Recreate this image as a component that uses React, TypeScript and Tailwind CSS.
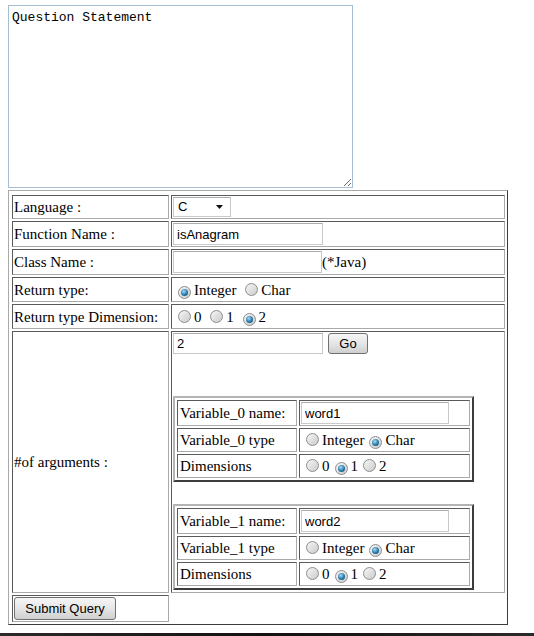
import React from "react";

const inset =
  "border border-t-[#5a5a5a] border-l-[#5a5a5a] border-r-[#a9a9a9] border-b-[#a9a9a9] p-px";
const textbox =
  "border border-[#c9c9c9] border-t-[#acacac] bg-white px-[3px] font-['Liberation_Sans',Arial,sans-serif] text-[13px] text-black outline-none";

function Radio({ checked }: { checked?: boolean }) {
  return (
    <span className="ml-[5px] mr-[3px] inline-flex h-[13px] w-[13px] items-center justify-center rounded-full border border-[#8d8d8d] bg-linear-to-br from-[#f6f6f6] to-[#cbcbcb] align-[-1px]">
      {checked && (
        <span className="h-[7px] w-[7px] rounded-full bg-[radial-gradient(circle_at_40%_35%,#a9dcf5,#2479aa_55%,#143f5c)]" />
      )}
    </span>
  );
}

function Button({ label, className }: { label: string; className: string }) {
  return (
    <button
      type="button"
      className={
        "rounded-[3px] border border-[#707070] bg-linear-to-b from-[#f6f6f6] via-[#e6e6e6] to-[#cfcfcf] font-['Liberation_Sans',Arial,sans-serif] text-[13px] text-black " +
        className
      }
    >
      {label}
    </button>
  );
}

function VariableTable({ index, word }: { index: number; word: string }) {
  return (
    <table className="table-fixed border-separate border-spacing-[2px] border-2 border-t-[#b4b4b4] border-l-[#b4b4b4] border-r-[#3c3c3c] border-b-[#3c3c3c] w-[301px]">
      <tbody>
        <tr>
          <td className={inset + " h-[26px] w-[120px] pl-[2px]"}>Variable_{index} name:</td>
          <td className={inset + " h-[26px] w-[171px]"}>
            <input className={textbox + " h-[22px] w-[148px]"} defaultValue={word} />
          </td>
        </tr>
        <tr>
          <td className={inset + " h-[24px] pl-[2px]"}>Variable_{index} type</td>
          <td className={inset + " h-[24px]"}>
            <Radio />
            Integer
            <Radio checked />
            Char
          </td>
        </tr>
        <tr>
          <td className={inset + " h-[24px] pl-[2px]"}>Dimensions</td>
          <td className={inset + " h-[24px]"}>
            <Radio />0<Radio checked />1<Radio />2
          </td>
        </tr>
      </tbody>
    </table>
  );
}

export default function App() {
  return (
    <div className="flex h-[636px] w-[534px] flex-col bg-white font-['Liberation_Serif','Times_New_Roman',serif] text-[15px] leading-[18px] text-black">
      <textarea
        className="ml-2 mt-[5px] h-[183px] w-[345px] border border-[#a7bdd1] pl-[3px] pt-[4px] font-['Liberation_Mono','Courier_New',monospace] text-[13px] leading-[15px] text-black outline-none"
        defaultValue="Question Statement"
      />

      <table className="ml-2 mt-[2px] w-[500px] table-fixed border-separate border-spacing-[2px] border border-t-[#a9a9a9] border-l-[#a9a9a9] border-r-[#3c3c3c] border-b-[#3c3c3c] pl-px pt-[2px]">
        <tbody>
          <tr>
            <td className={inset + " h-[24px] w-[157px]"}>Language :</td>
            <td className={inset + " h-[24px] w-[334px]"}>
              <div className="relative h-[20px] w-[58px]">
                <select className={textbox + " h-[20px] w-[58px] appearance-none pl-[4px]"}>
                  <option>C</option>
                  <option>C++</option>
                  <option>Java</option>
                </select>
                <svg className="pointer-events-none absolute right-[8px] top-[8px]" width="7" height="4" viewBox="0 0 7 4">
                  <path d="M0 0h7L3.5 4z" fill="#111" />
                </svg>
              </div>
            </td>
          </tr>
          <tr>
            <td className={inset + " h-[26px]"}>Function Name :</td>
            <td className={inset + " h-[26px]"}>
              <input className={textbox + " h-[22px] w-[150px]"} defaultValue="isAnagram" />
            </td>
          </tr>
          <tr>
            <td className={inset + " h-[26px]"}>Class Name :</td>
            <td className={inset + " h-[26px]"}>
              <div className="flex items-center">
                <input className={textbox + " h-[22px] w-[149px]"} />
                <span>(*Java)</span>
              </div>
            </td>
          </tr>
          <tr>
            <td className={inset + " h-[25px]"}>Return type:</td>
            <td className={inset + " h-[25px]"}>
              <Radio checked />
              Integer <Radio />
              Char
            </td>
          </tr>
          <tr>
            <td className={inset + " h-[25px]"}>Return type Dimension:</td>
            <td className={inset + " h-[25px]"}>
              <Radio />0 <Radio />1 <Radio checked />2
            </td>
          </tr>
          <tr>
            <td className={inset + " h-[262px]"}>#of arguments :</td>
            <td className={inset + " h-[262px] align-top"}>
              <div className="flex items-center gap-[5px]">
                <input className={textbox + " h-[21px] w-[150px]"} defaultValue="2" />
                <Button label="Go" className="h-[21px] w-[40px]" />
              </div>
              <div className="mt-[42px]">
                <VariableTable index={0} word="word1" />
              </div>
              <div className="mt-[22px]">
                <VariableTable index={1} word="word2" />
              </div>
            </td>
          </tr>
          <tr>
            <td className={inset + " h-[27px]"}>
              <Button label="Submit Query" className="h-[23px] w-[102px]" />
            </td>
            <td className="h-[27px]" />
          </tr>
        </tbody>
      </table>

      <div className="mt-auto h-[3px] bg-linear-to-r from-[#2b2b2b] via-[#111111] to-[#2b2b2b]" />
    </div>
  );
}
